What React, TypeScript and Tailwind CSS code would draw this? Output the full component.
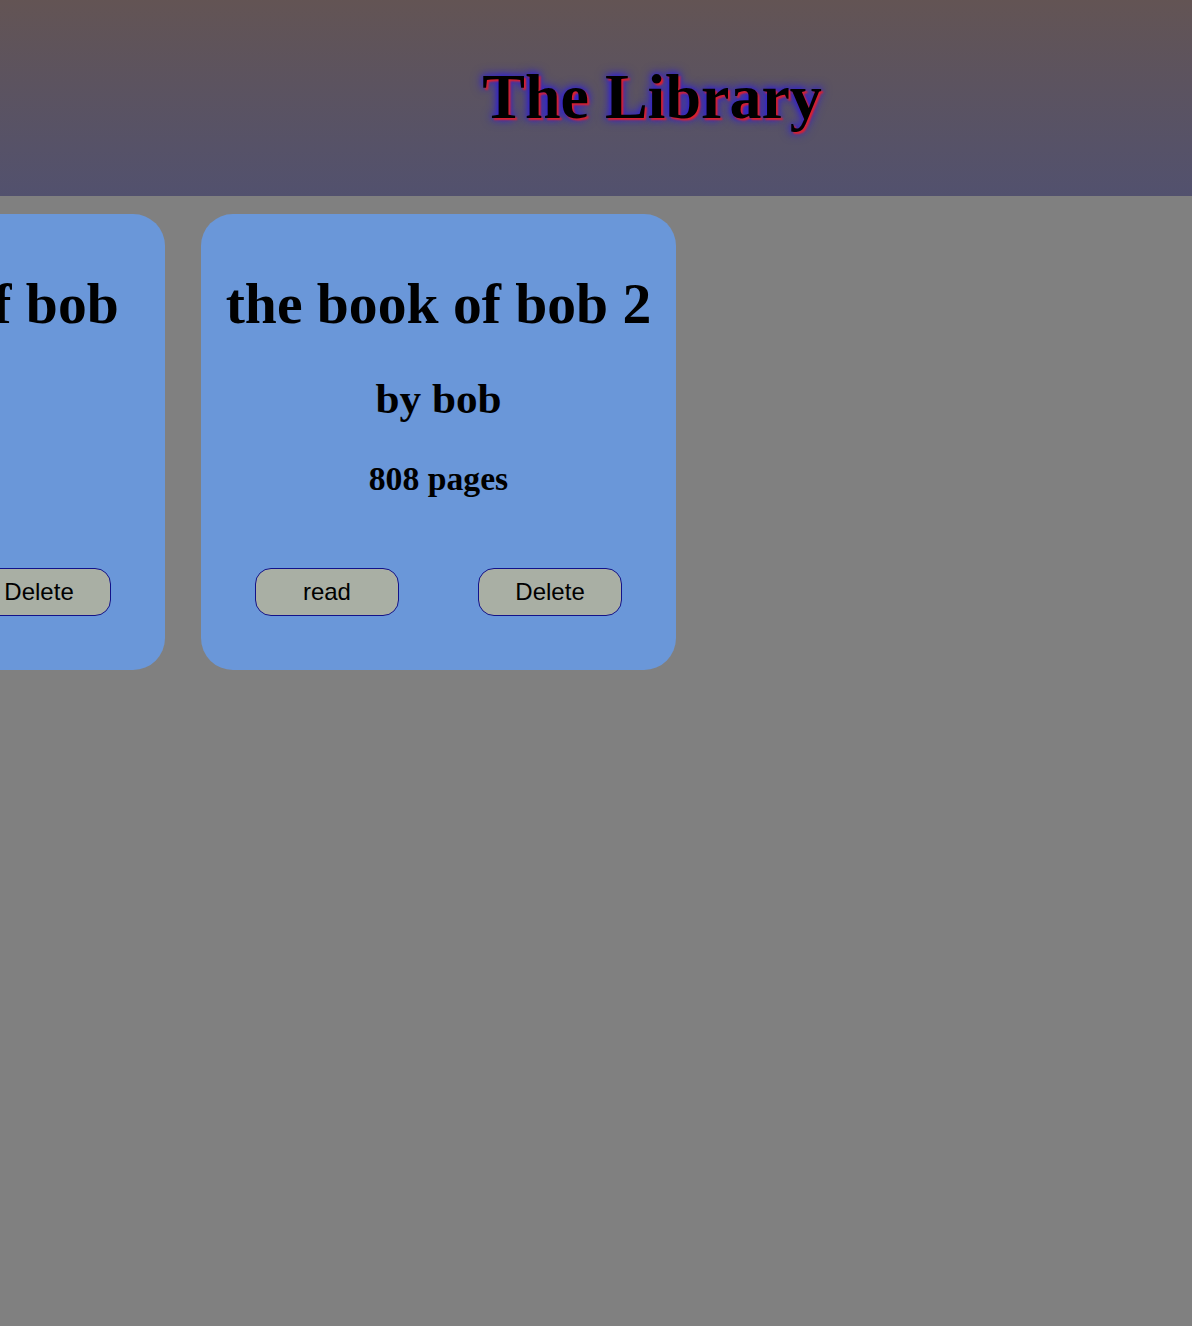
import React from "react";

const books = [
  { title: "the book of bob", author: "bob", pages: 808 },
  { title: "the book of bob 2", author: "bob", pages: 808 },
];

function Card({ title, author, pages }: { title: string; author: string; pages: number }) {
  return (
    <div className="w-[475px] shrink-0 h-[456px] rounded-[32px] bg-[#6a97d9] p-[14.4px] flex flex-col text-center text-black font-['Liberation_Serif',serif] font-bold">
      <h1 className="mt-[42.5px] text-[57.6px] leading-[66px] whitespace-nowrap">{title}</h1>
      <h2 className="mt-[36.8px] text-[43.2px] leading-[50px] whitespace-nowrap">by {author}</h2>
      <h3 className="mt-[35.4px] text-[33.7px] leading-[39px] whitespace-nowrap">{pages} pages</h3>
      <div className="mt-[70px] grid grid-cols-2">
        <div className="flex justify-center">
          <button className="w-[144px] h-[48px] rounded-[16px] border border-[#12128a] bg-[#a9afa4] font-['Liberation_Sans',sans-serif] font-normal text-[24px] text-black">
            read
          </button>
        </div>
        <div className="flex justify-center">
          <button className="w-[144px] h-[48px] rounded-[16px] border border-[#12128a] bg-[#a9afa4] font-['Liberation_Sans',sans-serif] font-normal text-[24px] text-black">
            Delete
          </button>
        </div>
      </div>
    </div>
  );
}

export default function App() {
  return (
    <div className="min-h-[1326px] w-full bg-[#808080] overflow-hidden">
      <header className="h-[196px] bg-gradient-to-b from-[#635454] to-[#52516e] pl-[112px] pt-[60px]">
        <h1
          className="text-center text-[64px] leading-[74px] font-bold text-black font-['Liberation_Serif',serif]"
          style={{ textShadow: "2px 2px 2px #e0202a, 0 0 6px #2a1ae0, 0 0 12px #2a1ae0" }}
        >
          The Library
        </h1>
      </header>
      <main className="pt-[18px] flex gap-[36px] ml-[-310px]">
        {books.map((b) => (
          <Card key={b.title} {...b} />
        ))}
      </main>
    </div>
  );
}
